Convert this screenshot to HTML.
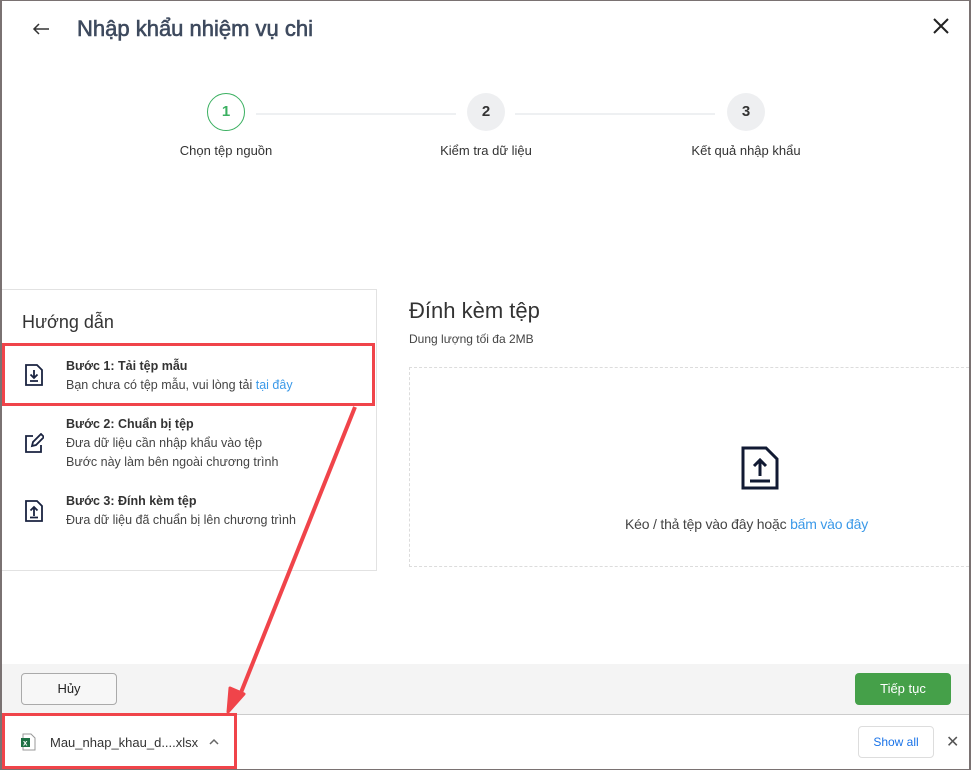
<!DOCTYPE html>
<html><head><meta charset="utf-8"><style>
*{box-sizing:border-box;margin:0;padding:0}
body{width:971px;height:770px;position:relative;background:#fff;font-family:"Liberation Sans",sans-serif;overflow:hidden;color:#333}
.a{position:absolute}
.frame{left:0;top:0;width:971px;height:770px;border-left:2px solid #7a7272;border-right:2px solid #7a7272;border-top:1px solid #7a7272;border-bottom:1px solid #7a7272}
.circ{width:38px;height:38px;border-radius:50%;background:#eeeff1;color:#333;font-size:15px;font-weight:bold;text-align:center;line-height:38px}
.lbl{font-size:13px;color:#333;text-align:center;width:200px}
.line{height:2px;background:#eef0f2}
.step{font-size:12.5px;line-height:19px;color:#444}
.step b{color:#333;font-weight:bold}
</style></head><body>
<svg class="a" style="left:32px;top:22px" width="18" height="14" viewBox="0 0 18 14" fill="none" stroke="#333" stroke-width="1.5"><path d="M17 7H2M7 2L2 7l5 5"/></svg>
<div class="a" style="left:77px;top:16px;font-size:22px;color:#3e4a5e;-webkit-text-stroke:0.6px #3e4a5e">Nhập khẩu nhiệm vụ chi</div>
<svg class="a" style="left:933px;top:18px" width="16" height="16" viewBox="0 0 16 16" stroke="#222" stroke-width="2"><path d="M1 1l14 14M15 1L1 15"/></svg>

<div class="a line" style="left:256px;top:113px;width:200px"></div>
<div class="a line" style="left:515px;top:113px;width:200px"></div>
<div class="a circ" style="left:207px;top:93px;background:#fff;border:1.5px solid #3bb061;color:#3bb061;line-height:35px">1</div>
<div class="a circ" style="left:467px;top:93px">2</div>
<div class="a circ" style="left:727px;top:93px">3</div>
<div class="a lbl" style="left:126px;top:143px">Chọn tệp nguồn</div>
<div class="a lbl" style="left:386px;top:143px">Kiểm tra dữ liệu</div>
<div class="a lbl" style="left:646px;top:143px">Kết quả nhập khẩu</div>

<div class="a" style="left:2px;top:289px;width:375px;height:282px;border:1px solid #e2e2e2;border-left:none"></div>
<div class="a" style="left:22px;top:312px;font-size:18px;color:#333">Hướng dẫn</div>
<div class="a" style="left:2px;top:343px;width:373px;height:63px;border:3px solid #f0444a"></div>
<svg class="a" style="left:24px;top:364px" width="20" height="22" viewBox="0 0 20 22" fill="none" stroke="#1a2340" stroke-width="1.8"><path d="M2 1h11l5 5v15H2z"/><path d="M10 6v8M6.5 10.5 10 14l3.5-3.5M6 17h8"/></svg>
<div class="a step" style="left:66px;top:357px"><b>Bước 1: Tải tệp mẫu</b><br>Bạn chưa có tệp mẫu, vui lòng tải <span style="color:#3b99e8">tại đây</span></div>
<svg class="a" style="left:24px;top:433px" width="20" height="20" viewBox="0 0 20 20" fill="none" stroke="#1a2340" stroke-width="1.8"><path d="M9 3H2v16h15v-7"/><path d="M8 13l1-4 8-8 3 3-8 8z"/></svg>
<div class="a step" style="left:66px;top:415px"><b>Bước 2: Chuẩn bị tệp</b><br>Đưa dữ liệu cần nhập khẩu vào tệp<br>Bước này làm bên ngoài chương trình</div>
<svg class="a" style="left:24px;top:500px" width="20" height="22" viewBox="0 0 20 22" fill="none" stroke="#1a2340" stroke-width="1.8"><path d="M2 1h11l5 5v15H2z"/><path d="M10 16V7M6.5 10.5 10 7l3.5 3.5M6 17.5h8"/></svg>
<div class="a step" style="left:66px;top:492px"><b>Bước 3: Đính kèm tệp</b><br>Đưa dữ liệu đã chuẩn bị lên chương trình</div>

<div class="a" style="left:409px;top:298px;font-size:22px;color:#333">Đính kèm tệp</div>
<div class="a" style="left:409px;top:332px;font-size:12px;color:#444">Dung lượng tối đa 2MB</div>
<div class="a" style="left:409px;top:367px;width:570px;height:200px;border:1px dashed #dcdcdc"></div>
<svg class="a" style="left:741px;top:446px" width="38" height="44" viewBox="0 0 38 44" fill="none" stroke="#111a33" stroke-width="3"><path d="M2 2h23l11 11v29H2z"/><path d="M19 30V14M13 20l6-6 6 6M9 35h20"/></svg>
<div class="a" style="left:625px;top:516px;font-size:14px;color:#444;letter-spacing:-0.2px">Kéo / thả tệp vào đây hoặc <span style="color:#3b99e8">bấm vào đây</span></div>

<div class="a" style="left:0;top:664px;width:971px;height:50px;background:#f4f4f4"></div>
<div class="a" style="left:21px;top:673px;width:96px;height:32px;border:1px solid #aaa;border-radius:4px;background:#f7f7f7;font-size:13px;text-align:center;line-height:30px;color:#222">Hủy</div>
<div class="a" style="left:855px;top:673px;width:96px;height:32px;border-radius:4px;background:#45a049;color:#fff;font-size:13px;text-align:center;line-height:32px">Tiếp tục</div>
<div class="a" style="left:0;top:714px;width:971px;height:1px;background:#ccc"></div>
<svg class="a" style="left:20px;top:733px" width="16" height="18" viewBox="0 0 16 18"><path d="M3 1h8l4 4v12H3z" fill="#fff" stroke="#999"/><rect x="1" y="5" width="9" height="9" fill="#1e7145"/><text x="3" y="12.5" font-size="8" fill="#fff" font-family="Liberation Sans" font-weight="bold">x</text></svg>
<div class="a" style="left:50px;top:735px;font-size:13px;color:#333">Mau_nhap_khau_d....xlsx</div>
<svg class="a" style="left:208px;top:737px" width="12" height="10" viewBox="0 0 12 10" fill="none" stroke="#666" stroke-width="1.5"><path d="M2 7l4-4 4 4"/></svg>
<div class="a" style="left:2px;top:713px;width:235px;height:56px;border:3px solid #f0444a"></div>
<div class="a" style="left:858px;top:726px;width:76px;height:32px;border:1px solid #ddd;border-radius:4px;font-size:12px;color:#1a73e8;text-align:center;line-height:30px">Show all</div>
<div class="a" style="left:946px;top:732px;font-size:16px;color:#555">✕</div>

<svg class="a" style="left:0;top:0" width="971" height="770"><line x1="355" y1="407" x2="240" y2="695" stroke="#f0444a" stroke-width="4"/><path d="M228 712l2-24 14 6z" fill="#f0444a" stroke="#f0444a" stroke-width="3" stroke-linejoin="round"/></svg>
<div class="a frame"></div>
</body></html>
